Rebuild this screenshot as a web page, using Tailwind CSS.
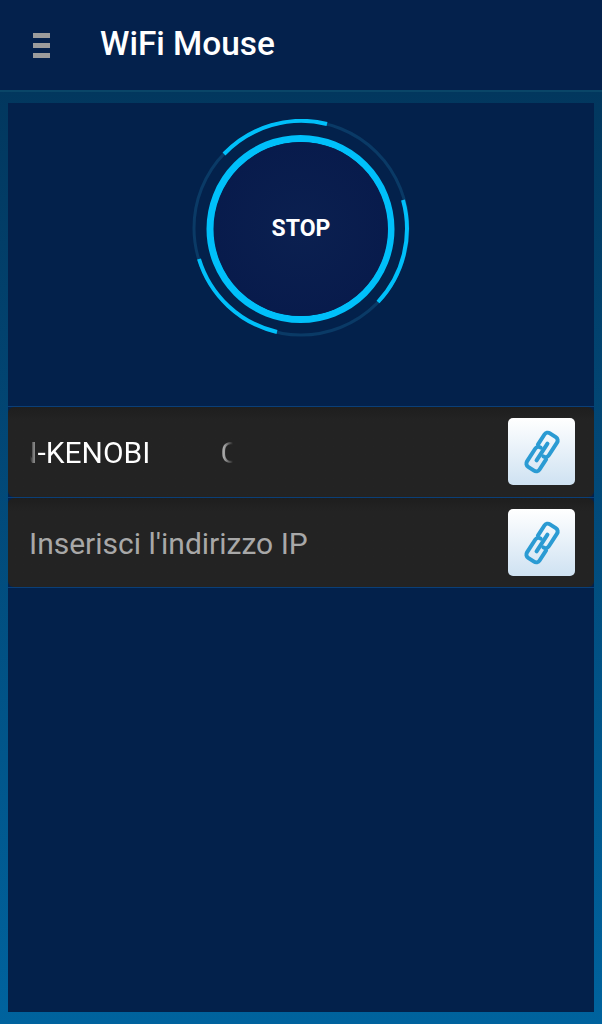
<!DOCTYPE html>
<html lang="en">
<head>
  <meta charset="UTF-8" />
  <meta name="viewport" content="width=device-width, initial-scale=1" />
  <title>WiFi Mouse</title>
  <script src="https://cdn.jsdelivr.net/npm/@tailwindcss/browser@4"></script>
</head>
<body class="h-[1024px] w-[602px] overflow-hidden bg-linear-to-b from-[#023358] to-[#00639e] font-['Roboto',sans-serif]">
  <div class="flex h-full flex-col">

    <!-- top bar -->
    <header class="flex h-[92px] shrink-0 items-center border-b-2 border-[#0a4668] bg-[#04214c]">
      <div class="ml-[33px] flex h-[25px] w-[17px] flex-col justify-between">
        <span class="h-[5px] bg-[#9c9c9c]"></span>
        <span class="h-[5px] bg-[#9c9c9c]"></span>
        <span class="h-[5px] bg-[#9c9c9c]"></span>
      </div>
      <h1 class="ml-[50px] pb-[2px] text-[33.4px] font-medium leading-none text-white">WiFi Mouse</h1>
    </header>

    <main class="flex min-h-0 flex-1 flex-col px-2 pt-[11px] pb-3">
      <div class="flex flex-1 flex-col bg-[#03214b]">

        <!-- stop button -->
        <section class="flex h-[304px] shrink-0 justify-center border-b border-[#0a3f78] pt-[16px]">
          <div class="relative h-[218px] w-[218px]">
            <svg class="absolute inset-0" width="218" height="218" viewBox="0 0 218 218" fill="none">
              <circle cx="109" cy="109" r="107" stroke="#0a3a66" stroke-width="3" />
              <path d="M32 35A107 107 0 0 1 135 5" stroke="#00c0fa" stroke-width="4" />
              <path d="M211 81A107 107 0 0 1 186 183" stroke="#00c0fa" stroke-width="4" />
              <path d="M7 140A107 107 0 0 0 85 213" stroke="#00c0fa" stroke-width="4" />
              <circle cx="108.5" cy="110" r="90.5" stroke="#00c0fa" stroke-width="7" />
            </svg>
            <button class="absolute top-[23px] left-[22px] flex h-[174px] w-[174px] items-center justify-center rounded-full bg-radial from-[#0b2050] to-[#07194a] pt-[1px] text-[23px] font-bold text-white">STOP</button>
          </div>
        </section>

        <!-- connection rows -->
        <div class="h-[91px] border-b border-[#0a3f78]">
          <div class="flex h-full items-center justify-between rounded-md bg-linear-to-b from-[#1e1e1e] to-[#232323] to-[15%] pr-[19px] pl-[8px]">
            <div class="flex items-center text-[30px]">
              <span class="bg-[linear-gradient(90deg,transparent_14px,#888_18px,#fff_22px)] bg-clip-text text-transparent">N-KENOBI</span>
              <span class="ml-[70px] bg-[linear-gradient(90deg,#a8a8a8_4px,transparent_13px)] bg-clip-text text-transparent">C</span>
            </div>
            <button class="mb-[1px] flex h-[67px] w-[67px] items-center justify-center rounded-[5px] bg-linear-to-b from-white to-[#cfe2f2]">
              <svg width="54" height="54" viewBox="-27 -27 54 54" fill="none" stroke="#2b9bd3" stroke-width="4" stroke-linecap="round">
                <g transform="rotate(33)">
                  <path d="M-7.5 -4V-16a4 4 0 0 1 4-4H3.500a4 4 0 0 1 4 4V-1a4 4 0 0 1-4 4" />
                  <path d="M7.500 4V16a4 4 0 0 1-4 4H-3.500a4 4 0 0 1-4-4V1a4 4 0 0 1 4-4" />
                  <path d="M0 -10V10" />
                </g>
              </svg>
            </button>
          </div>
        </div>

        <div class="h-[90px] border-b border-[#0a3f78]">
          <div class="flex h-full items-center justify-between rounded-md bg-linear-to-b from-[#1e1e1e] to-[#232323] to-[15%] pr-[19px] pl-[21px]">
            <span class="pt-[2px] text-[30px] text-[#a8a8a8]">Inserisci l'indirizzo IP</span>
            <button class="flex h-[67px] w-[67px] items-center justify-center rounded-[5px] bg-linear-to-b from-white to-[#cfe2f2]">
              <svg width="54" height="54" viewBox="-27 -27 54 54" fill="none" stroke="#2b9bd3" stroke-width="4" stroke-linecap="round">
                <g transform="rotate(33)">
                  <path d="M-7.5 -4V-16a4 4 0 0 1 4-4H3.500a4 4 0 0 1 4 4V-1a4 4 0 0 1-4 4" />
                  <path d="M7.500 4V16a4 4 0 0 1-4 4H-3.500a4 4 0 0 1-4-4V1a4 4 0 0 1 4-4" />
                  <path d="M0 -10V10" />
                </g>
              </svg>
            </button>
          </div>
        </div>

      </div>
    </main>
  </div>
</body>
</html>
